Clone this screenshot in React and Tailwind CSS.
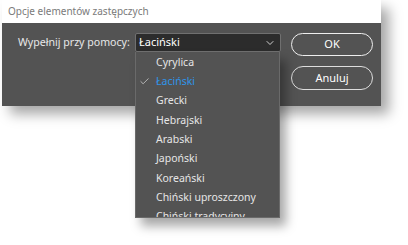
import { ChevronDown, Check } from "lucide-react";

const items = [
  "Cyrylica",
  "Łaciński",
  "Grecki",
  "Hebrajski",
  "Arabski",
  "Japoński",
  "Koreański",
  "Chiński uproszczony",
  "Chiński tradycyjny",
];

export default function App() {
  const selected = "Łaciński";

  return (
    <div
      className="relative h-[245px] w-[408px] overflow-hidden bg-white"
      style={{ fontFamily: '"Noto Sans", "Open Sans", sans-serif' }}
    >
      {/* dialog */}
      <div className="ml-[2px] w-[379px] shadow-[8px_8px_12px_rgba(0,0,0,0.35)]">
        <div className="flex h-[23px] items-center whitespace-nowrap bg-white pl-[6px] text-[10px] text-[#7a7a7a]">
          Opcje elementów zastępczych
        </div>
        <div className="flex h-[83px] bg-[#535353] pt-[10px]">
          <div className="flex h-[19px] w-[133px] shrink-0 items-center whitespace-nowrap pl-[16px] text-[10.6px] text-[#e8e8e8]">
            Wypełnij przy pomocy:
          </div>
          <div className="flex h-[19px] w-[146px] shrink-0 items-center justify-between rounded-[2px] border border-[#707070] bg-[#2c2c2c] pl-[3px] pr-[4px] text-[11px] text-white">
            <span>{selected}</span>
            <ChevronDown size={12} strokeWidth={2} className="text-[#cfcfcf]" />
          </div>
          <div className="ml-[10px] flex flex-col gap-[10px]">
            <button className="h-[23px] w-[82px] rounded-full border-[1.5px] border-[#eeeeee] text-[11px] text-white">
              OK
            </button>
            <button className="h-[24px] w-[82px] rounded-full border-[1.5px] border-[#dddddd] text-[11px] text-white">
              Anuluj
            </button>
          </div>
        </div>
      </div>

      {/* open dropdown list */}
      <div className="absolute left-[135px] top-[52px] h-[166px] w-[145px] overflow-hidden border-x border-b border-[#6a6a6a] bg-[#535353] pt-[1px] shadow-[6px_8px_10px_rgba(0,0,0,0.35)]">
        {items.map((it) => (
          <div key={it} className="relative flex h-[19.3px] items-center whitespace-nowrap pl-[20px] text-[10.5px]">
            {it === selected && (
              <Check size={11} strokeWidth={2} className="absolute left-[3px] text-[#bdbdbd]" />
            )}
            <span className={it === selected ? "text-[#2f93e8]" : "text-[#e6e6e6]"}>{it}</span>
          </div>
        ))}
      </div>
    </div>
  );
}
